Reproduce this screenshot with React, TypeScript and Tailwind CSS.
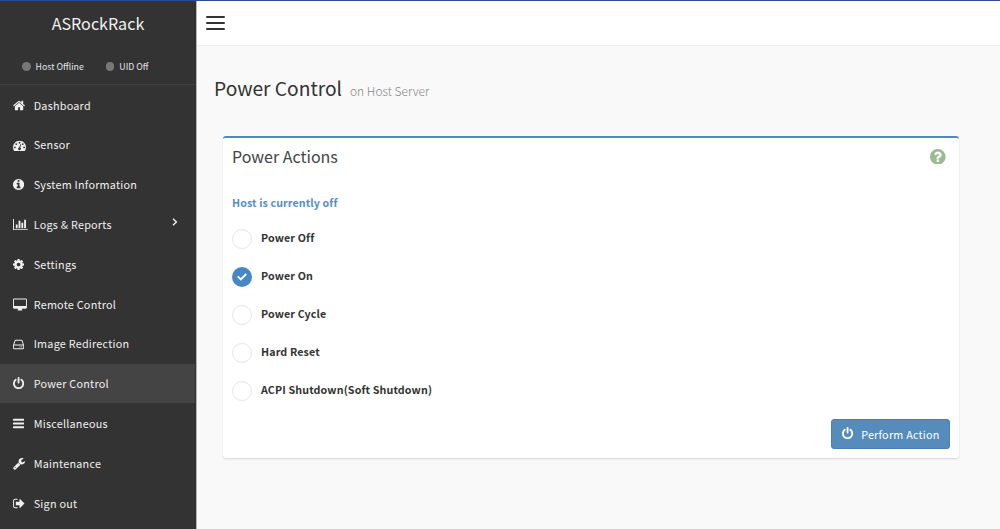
import { useState, type ReactNode } from 'react';

type IconDef = { box: string; width: number; height: number; path: string };

// One em of the icon font is 1792 units and 13px here.
const em = 13 / 1792;

function Glyph({ icon, scale = 1, className = '' }: { icon: IconDef; scale?: number; className?: string }) {
  return (
    <svg
      viewBox={icon.box}
      width={icon.width * em * scale}
      height={icon.height * em * scale}
      fill="currentColor"
      fillRule="nonzero"
      className={'shrink-0 ' + className}
    >
      <path d={icon.path} />
    </svg>
  );
}

const home: IconDef = {
  box: '64 0 1664 1792', width: 1664, height: 1792,
  path: 'M1472 992v480q0 26-19 45t-45 19h-384v-384h-256v384h-384q-26 0-45-19t-19-45v-480q0-1 .5-3t.5-3l575-474 575 474q1 2 1 6zm223-69l-62 74q-8 9-21 11h-3q-13 0-21-7l-692-577-692 577q-12 8-24 7-13-2-21-11l-62-74q-8-10-7-23.5t11-21.5l719-599q32-26 76-26t76 26l244 204v-195q0-14 9-23t23-9h192q14 0 23 9t9 23v408l219 182q10 8 11 21.5t-7 23.5z',
};
const gauge: IconDef = {
  box: '0 0 1792 1792', width: 1792, height: 1792,
  path: 'M384 1152q0-53-37.5-90.5t-90.5-37.5-90.5 37.5-37.5 90.5 37.5 90.5 90.5 37.5 90.5-37.5 37.5-90.5zm192-448q0-53-37.5-90.5t-90.5-37.5-90.5 37.5-37.5 90.5 37.5 90.5 90.5 37.5 90.5-37.5 37.5-90.5zm428 481l101-382q6-26-7.5-48.5t-38.5-29.5-48 6.5-30 39.5l-101 382q-60 5-107 43.5t-63 98.5q-20 77 20 146t117 89 146-20 89-117q16-60-6-117t-72-91zm660-33q0-53-37.5-90.5t-90.5-37.5-90.5 37.5-37.5 90.5 37.5 90.5 90.5 37.5 90.5-37.5 37.5-90.5zm-640-640q0-53-37.5-90.5t-90.5-37.5-90.5 37.5-37.5 90.5 37.5 90.5 90.5 37.5 90.5-37.5 37.5-90.5zm448 192q0-53-37.5-90.5t-90.5-37.5-90.5 37.5-37.5 90.5 37.5 90.5 90.5 37.5 90.5-37.5 37.5-90.5zm320 448q0 261-141 483-19 29-54 29h-1402q-35 0-54-29-141-221-141-483 0-182 71-348t191-286 286-191 348-71 348 71 286 191 191 286 71 348z',
};
const info: IconDef = {
  box: '128 0 1536 1792', width: 1536, height: 1792,
  path: 'M1152 1376v-160q0-14-9-23t-23-9h-96v-512q0-14-9-23t-23-9h-320q-14 0-23 9t-9 23v160q0 14 9 23t23 9h96v320h-96q-14 0-23 9t-9 23v160q0 14 9 23t23 9h448q14 0 23-9t9-23zm-128-896v-160q0-14-9-23t-23-9h-192q-14 0-23 9t-9 23v160q0 14 9 23t23 9h192q14 0 23-9t9-23zm640 416q0 209-103 385.5t-279.5 279.5-385.5 103-385.5-103-279.5-279.5-103-385.5 103-385.5 279.5-279.5 385.5-103 385.5 103 279.5 279.5 103 385.5z',
};
const bars: IconDef = {
  box: '0 0 2048 1792', width: 2048, height: 1792,
  path: 'M640 896v512h-256v-512h256zm384-512v1024h-256v-1024h256zm1024 1152v128h-2048v-1536h128v1408h1920zm-640-896v768h-256v-768h256zm384-384v1152h-256v-1152h256z',
};
const cog: IconDef = {
  box: '128 0 1536 1792', width: 1536, height: 1792,
  path: 'M1152 896q0-106-75-181t-181-75-181 75-75 181 75 181 181 75 181-75 75-181zm512-109v222q0 12-8 23t-20 13l-185 28q-19 54-39 91 35 50 107 138 10 12 10 25t-9 23q-27 37-99 108t-94 71q-12 0-26-9l-138-108q-44 23-91 38-16 136-29 186-7 28-36 28h-222q-14 0-24.5-8.5t-11.5-21.5l-28-184q-49-16-90-37l-141 107q-10 9-25 9-14 0-25-11-126-114-165-168-7-10-7-23 0-12 8-23 15-21 51-66.5t54-70.5q-27-50-41-99l-183-27q-13-2-21-12.5t-8-23.5v-222q0-12 8-23t19-13l186-28q14-46 39-92-40-57-107-138-10-12-10-24 0-10 9-23 26-36 98.5-107.5t94.5-71.5q13 0 26 10l138 107q44-23 91-38 16-136 29-186 7-28 36-28h222q14 0 24.5 8.5t11.5 21.5l28 184q49 16 90 37l142-107q9-9 24-9 13 0 25 10 129 119 165 170 7 8 7 22 0 12-8 23-15 21-51 66.5t-54 70.5q26 50 41 98l183 28q13 2 21 12.5t8 23.5z',
};
const desktop: IconDef = {
  box: '0 0 1920 1792', width: 1920, height: 1792,
  path: 'M1792 1056v-832q0-13-9.500-22.500t-22.500-9.500h-1600q-13 0-22.500 9.500t-9.500 22.500v832q0 13 9.500 22.500t22.500 9.500h1600q13 0 22.500-9.500t9.500-22.500zM1920 224v1088q0 66-47 113t-113 47h-544q0 37 16 77.500t32 71 16 43.500q0 26-19 45t-45 19h-512q-26 0-45-19t-19-45q0-14 16-44t32-70 16-78h-544q-66 0-113-47t-47-113v-1088q0-66 47-113t113-47h1600q66 0 113 47t47 113z',
};
const drive: IconDef = {
  box: '0 0 1536 1792', width: 1536, height: 1792,
  path: 'M1040 1216a80 80 0 1 1-160 0a80 80 0 1 1 160 0zM1296 1216a80 80 0 1 1-160 0a80 80 0 1 1 160 0zM1408 1376v-320q0-13-9.500-22.500t-22.500-9.500h-1216q-13 0-22.500 9.500t-9.500 22.500v320q0 13 9.500 22.500t22.500 9.500h1216q13 0 22.500-9.500t9.500-22.500zM178 896h1180l-157-482q-4-13-16-21.500t-26-8.500h-782q-14 0-26 8.500t-16 21.500zM1536 1056v320q0 66-47 113t-113 47h-1216q-66 0-113-47t-47-113v-320q0-25 16-75l197-606q17-53 63-86t101-33h782q55 0 101 33t63 86l197 606q16 50 16 75z',
};
const power: IconDef = {
  box: '128 0 1536 1792', width: 1536, height: 1792,
  path: 'M1664 896q0 156-61 298t-164 245-245 164-298 61-298-61-245-164-164-245-61-298q0-182 80.5-343t226.5-270q43-32 95.5-25t83.5 50q32 42 24.5 94.5t-49.5 84.5q-98 74-151.5 181t-53.5 228q0 104 40.5 198.5t109.5 163.5 163.5 109.5 198.5 40.5 198.5-40.5 163.5-109.5 109.5-163.5 40.5-198.5q0-121-53.5-228t-151.5-181q-42-32-49.5-84.5t24.5-94.5q31-43 84-50t95 25q146 109 226.5 270t80.5 343zm-640-768v640q0 52-38 90t-90 38-90-38-38-90v-640q0-52 38-90t90-38 90 38 38 90z',
};
const lines: IconDef = {
  box: '0 0 1536 1792', width: 1536, height: 1792,
  path: 'M0 320q0-64 64-64h1408q64 0 64 64v128q0 64-64 64h-1408q-64 0-64-64zM0 832q0-64 64-64h1408q64 0 64 64v128q0 64-64 64h-1408q-64 0-64-64zM0 1344q0-64 64-64h1408q64 0 64 64v128q0 64-64 64h-1408q-64 0-64-64z',
};
const wrench: IconDef = {
  box: '64 0 1664 1792', width: 1664, height: 1792,
  path: 'M448 1472q0-26-19-45t-45-19-45 19-19 45 19 45 45 19 45-19 19-45zm644-420l-682 682q-37 37-90 37-52 0-91-37l-106-108q-38-36-38-90 0-53 38-91l681-681q39 98 114.5 173.5t173.5 114.5zm634-435q0 39-23 106-47 134-164.5 217.5t-258.5 83.5q-185 0-316.5-131.5t-131.5-316.5 131.5-316.5 316.5-131.5q58 0 121.5 16.5t107.5 46.5q16 11 16 28t-16 28l-293 169v224l193 107q5-3 79-48.5t135.5-81 70.5-35.5q15 0 23.5 10t8.5 25z',
};
const signOut: IconDef = {
  box: '64 0 1600 1792', width: 1600, height: 1792,
  path: 'M704 1440q0 4 1 20t.5 26.5-3 23.5-10 19.5-20.5 6.5h-320q-119 0-203.5-84.5t-84.5-203.5v-704q0-119 84.5-203.5t203.5-84.5h320q13 0 22.5 9.5t9.5 22.5q0 4 1 20t.5 26.5-3 23.5-10 19.5-20.5 6.5h-320q-66 0-113 47t-47 113v704q0 66 47 113t113 47h312l11.5 1 11.5 3 8 5.5 7 9 2 13.5zm928-544q0 26-19 45l-544 544q-19 19-45 19t-45-19-19-45v-288h-448q-26 0-45-19t-19-45v-384q0-26 19-45t45-19h448v-288q0-26 19-45t45-19 45 19l544 544q19 19 19 45z',
};
const question: IconDef = {
  box: '128 128 1536 1536', width: 1536, height: 1536,
  path: 'M1024 1376v-192q0-14-9-23t-23-9h-192q-14 0-23 9t-9 23v192q0 14 9 23t23 9h192q14 0 23-9t9-23zm256-672q0-88-55.5-163t-138.500-116-170-41q-243 0-371 213-15 24 8 42l132 100q7 6 19 6 16 0 25-12 53-68 86-92 34-24 86-24 48 0 85.500 26t37.500 59q0 38-20 61t-68 45q-63 28-115.500 86.500t-52.500 125.500v36q0 14 9 23t23 9h192q14 0 23-9t9-23q0-19 21.500-49.500t54.500-49.500q32-18 49-28.500t46-35 44.500-48 28-60.500 12.500-81zm384 192q0 209-103 385.5t-279.5 279.5-385.5 103-385.5-103-279.5-279.5-103-385.5 103-385.5 279.5-279.5 385.5-103 385.5 103 279.5 279.5 103 385.5z',
};

const menu: { label: string; icon: IconDef; sub?: boolean }[] = [
  { label: 'Dashboard', icon: home },
  { label: 'Sensor', icon: gauge },
  { label: 'System Information', icon: info },
  { label: 'Logs & Reports', icon: bars, sub: true },
  { label: 'Settings', icon: cog },
  { label: 'Remote Control', icon: desktop },
  { label: 'Image Redirection', icon: drive },
  { label: 'Power Control', icon: power },
  { label: 'Miscellaneous', icon: lines },
  { label: 'Maintenance', icon: wrench },
  { label: 'Sign out', icon: signOut },
];

const actions = ['Power Off', 'Power On', 'Power Cycle', 'Hard Reset', 'ACPI Shutdown(Soft Shutdown)'];

function Status({ children }: { children: ReactNode }) {
  return (
    <span className="flex items-center gap-[5px]">
      <span className="size-[8.500px] rounded-full bg-[#777]" />
      <span className="pt-px">{children}</span>
    </span>
  );
}

function Sidebar() {
  return (
    <aside className="flex w-[197px] shrink-0 flex-col border-r border-[#b5b5b5] bg-[#333] text-[#f0f0f0]">
      <div className="flex h-[46px] items-center justify-center pb-[2px] text-[16.1px] leading-none">ASRockRack</div>
      <div className="flex h-[38px] gap-[22px] border-b border-[#3d3d3d] pl-[22px] pt-[2px] text-[8.8px] leading-none text-[#e4e4e4]">
        <Status>Host Offline</Status>
        <Status>UID Off</Status>
      </div>
      <nav className="flex flex-col">
        {menu.map((item) => (
          <a
            key={item.label}
            className={
              'flex h-[39.8px] items-center pl-[13px] text-[10.8px] leading-none tracking-[0.24px] ' +
              (item.label === 'Power Control' ? 'mr-px bg-[#444]' : '')
            }
          >
            <span className="flex w-[20.700px] shrink-0 pt-px">
              <Glyph icon={item.icon} />
            </span>
            <span className="pt-[0.300px]">{item.label}</span>
            {item.sub && (
              <svg viewBox="0 0 6 8" className="mb-[5px] ml-auto mr-[18px] h-[8px] w-[6px]" fill="none" stroke="currentColor" strokeWidth="1.4">
                <path d="M1 .7L4.400 4L1 7.300" />
              </svg>
            )}
          </a>
        ))}
      </nav>
    </aside>
  );
}

export default function App() {
  const [selected, setSelected] = useState('Power On');
  return (
    <div className="flex h-[529px] w-[1000px] flex-col overflow-hidden border-t border-[#2f4a91] bg-[#f9f9f9] font-['Noto_Sans_CJK_SC',sans-serif] text-[#333]">
      <div className="flex min-h-0 grow">
        <Sidebar />
        <div className="flex grow flex-col">
          <header className="flex h-[45px] shrink-0 border-b border-[#eee] bg-white pl-[9px] pt-[15px]">
            <button className="flex h-[14px] w-[19px] flex-col justify-between" aria-label="Toggle menu">
              <span className="h-[2px] w-full rounded-sm bg-[#333]" />
              <span className="h-[2px] w-full rounded-sm bg-[#333]" />
              <span className="h-[2px] w-full rounded-sm bg-[#333]" />
            </button>
          </header>
          <main className="flex flex-col pl-[17px]">
            <h1 className="mt-[30px] flex h-[24px] items-baseline gap-[8px] text-[19.2px] leading-[24px]">
              Power Control
              <small className="text-[12px] font-light leading-none text-[#888]">on Host Server</small>
            </h1>
            <section className="ml-[9px] mt-[36px] flex h-[322px] w-[736px] flex-col rounded-[3px] border-t-2 border-[#4b8bc5] bg-white shadow-[0_1px_2px_rgba(0,0,0,0.14)]">
              <div className="flex h-[37px] items-center justify-between pl-[9px] pr-[13px]">
                <h2 className="pb-px text-[16px] leading-none text-[#444]">Power Actions</h2>
                <Glyph icon={question} scale={1.4} className="text-[#9aba91]" />
              </div>
              <p className="mt-[20px] flex h-[16px] items-center pl-[9px] text-[10.7px] font-bold leading-none tracking-[0.1px] text-[#5590c2]">
                Host is currently off
              </p>
              <div className="mt-[8px] flex flex-col pl-[9px]">
                {actions.map((a) => (
                  <label key={a} className="flex h-[38.2px] items-center gap-[9px] text-[10.7px] font-bold leading-none tracking-[0.13px]" onClick={() => setSelected(a)}>
                    <span
                      className={
                        'mt-px flex size-[20px] items-center justify-center rounded-full ' +
                        (a === selected ? 'bg-[#4787c4] text-white' : 'border border-[#e6e6e6]')
                      }
                    >
                      {a === selected && (
                        <svg viewBox="0 0 10 8" className="h-[8px] w-[10px]" fill="none" stroke="currentColor" strokeWidth="1.9">
                          <path d="M.7 3.400L3.800 6.400L9.300 1" />
                        </svg>
                      )}
                    </span>
                    <span>{a}</span>
                  </label>
                ))}
              </div>
              <button className="ml-auto mr-[9px] mt-[9px] flex h-[30px] w-[119px] items-center rounded-[3px] border border-[#4a80b2] bg-[#568cbb] pl-[10px] text-[10.8px] leading-none tracking-[0.22px] text-white">
                <Glyph icon={power} />
                <span className="ml-[8px]">Perform Action</span>
              </button>
            </section>
          </main>
        </div>
      </div>
    </div>
  );
}
